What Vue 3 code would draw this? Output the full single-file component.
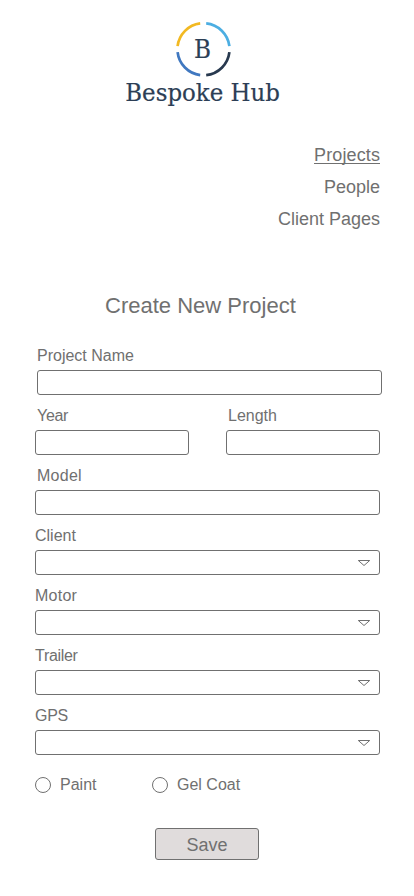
<script setup>
import { ref } from 'vue'

const links = ['Projects', 'People', 'Client Pages']
const selects = ['Client', 'Motor', 'Trailer', 'GPS']
const finishes = ['Paint', 'Gel Coat']
const active = ref('Projects')
</script>

<template>
  <main class="page">
    <header>
      <svg class="logo" width="174" height="96" viewBox="116 16 174 96" role="img" aria-label="Bespoke Hub">
        <g fill="none" stroke-width="2.7">
          <path d="M177.6 46.1A26.1 26.1 0 0 1 200.2 23.4" stroke="#f2b922" />
          <path d="M206.2 23.4A26.1 26.1 0 0 1 229.4 46.1" stroke="#4caee2" />
          <path d="M177.6 52.1A26.1 26.1 0 0 0 200.2 75.1" stroke="#4078c0" />
          <path d="M206.2 75.1A26.1 26.1 0 0 0 229.4 52.1" stroke="#28394f" />
        </g>
        <text class="monogram" x="194" y="58" textLength="17" lengthAdjust="spacingAndGlyphs">B</text>
        <text class="wordmark" x="125.3" y="101" textLength="154.5" lengthAdjust="spacingAndGlyphs">Bespoke Hub</text>
      </svg>
      <nav class="nav">
        <a v-for="l in links" :key="l" :class="{ active: l === active }" @click="active = l"><span>{{ l }}</span></a>
      </nav>
    </header>

    <h1 class="title">Create New Project</h1>

    <form class="form" @submit.prevent>
      <label class="field wide"><span class="caption">Project Name</span><input class="box" type="text" /></label>
      <div class="pair">
        <label class="field"><span class="caption inset year">Year</span><input class="box" type="text" /></label>
        <label class="field"><span class="caption inset">Length</span><input class="box" type="text" /></label>
      </div>
      <label class="field"><span class="caption inset model">Model</span><input class="box" type="text" /></label>
      <div v-for="s in selects" :key="s" class="field">
        <span class="caption" :class="s.toLowerCase()">{{ s }}</span>
        <div class="box select">
          <svg width="15" height="8" viewBox="0 0 15 8"><path d="M1.3 1.5H12.7L7 6.5Z" fill="none" stroke="#707070" /></svg>
        </div>
      </div>
      <div class="options">
        <label v-for="f in finishes" :key="f" class="option"><input type="radio" name="finish" /><span>{{ f }}</span></label>
      </div>
      <button class="save"><span>Save</span></button>
    </form>
  </main>
</template>

<style>
body {
  background: #fff;
}
</style>

<style scoped>
.page {
  box-sizing: border-box;
  width: 414px;
  height: 896px;
  padding-top: 16px;
  color: #707070;
  font-family: "Liberation Sans", Arial, sans-serif;
}
.logo {
  display: block;
  margin-left: 116px;
}
.logo text {
  font-family: "DejaVu Serif", serif;
  fill: #2c3e55;
  stroke: #2c3e55;
  stroke-width: 0.2px;
}
.monogram {
  font-size: 26.5px;
}
.wordmark {
  font-size: 23.5px;
}
.nav {
  display: flex;
  flex-direction: column;
  align-items: flex-end;
  padding: 27px 34px 0 0;
}
.nav a {
  font-size: 18px;
  line-height: 32px;
  cursor: pointer;
}
.nav .active {
  letter-spacing: 0.12px;
}
.nav .active span {
  text-decoration: underline;
  text-decoration-thickness: 1px;
  text-underline-offset: 2px;
  text-decoration-skip-ink: none;
}
.title {
  margin: 57px 0 0 105px;
  font-size: 22px;
  font-weight: 400;
  line-height: 28px;
}
.form {
  display: flex;
  flex-direction: column;
  width: 345px;
  margin: 25px 0 0 35px;
}
.field {
  display: flex;
  flex-direction: column;
  height: 60px;
}
.wide {
  margin: 0 -2px 0 2px;
}
.caption {
  box-sizing: border-box;
  height: 25px;
  padding-top: 1px;
  font-size: 16px;
  line-height: 20px;
}
.inset {
  padding-left: 2px;
}
.year,
.gps,
.trailer {
  letter-spacing: -0.3px;
}
.model,
.motor {
  letter-spacing: 0.25px;
}
.box {
  box-sizing: border-box;
  width: 100%;
  height: 25px;
  margin: 0;
  border: 1px solid #707070;
  border-radius: 3px;
  background: #fff;
}
.pair {
  display: grid;
  grid-template-columns: 154px 154px;
  justify-content: space-between;
}
.select {
  display: flex;
  align-items: flex-start;
  justify-content: flex-end;
  padding: 8px 7px 0 0;
}
.options {
  display: flex;
  height: 20px;
  margin-top: 10px;
}
.option {
  display: flex;
  align-items: center;
  width: 117px;
  gap: 9px;
  font-size: 16px;
  line-height: 20px;
}
.option input {
  appearance: none;
  box-sizing: border-box;
  width: 16px;
  height: 16px;
  margin: 0;
  border: 1px solid #707070;
  border-radius: 50%;
}
.save {
  width: 104px;
  height: 32px;
  margin: 33px 0 0 120px;
  padding: 2px 0 0;
  border: 1px solid #707070;
  border-radius: 3px;
  background: #e0dcdc;
  color: #707070;
  font: 18px/28px "Liberation Sans", Arial, sans-serif;
}
</style>
